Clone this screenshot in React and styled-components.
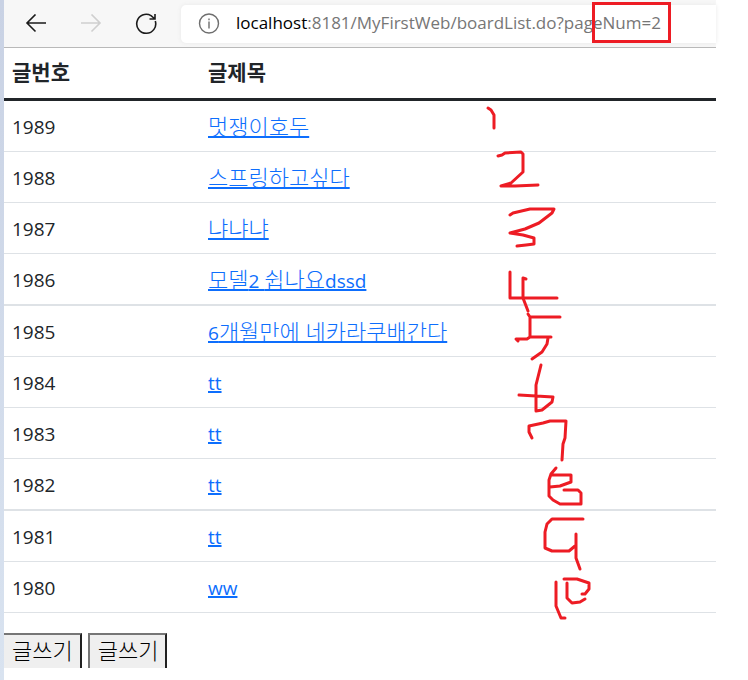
import React from "react";
import styled, { createGlobalStyle } from "styled-components";

const posts = [
  { no: 1989, title: [{ ko: "멋쟁이호두" }] },
  { no: 1988, title: [{ ko: "스프링하고싶다" }] },
  { no: 1987, title: [{ ko: "냐냐냐" }] },
  { no: 1986, title: [{ ko: "모델" }, { en: "2 " }, { ko: "쉽나요" }, { en: "dssd" }], thick: true },
  { no: 1985, title: [{ en: "6" }, { ko: "개월만에 네카라쿠배간다" }] },
  { no: 1984, title: [{ en: "tt" }] },
  { no: 1983, title: [{ en: "tt" }] },
  { no: 1982, title: [{ en: "tt" }], thick: true },
  { no: 1981, title: [{ en: "tt" }] },
  { no: 1980, title: [{ en: "ww" }] },
];

// pen strokes counting the rows, 1 to 10
const strokes = [
  "M488 108L491 110L494 115L494 128",
  "M498 156L502 155L505 153L521 152L523 154L523 172L511 183L501 186L515 186L538 185",
  "M510 215L513 213L530 209L554 209L552 213L539 223L525 229L510 233L523 235L534 238L534 244L526 245L517 246",
  "M510 272L510 298L557 298",
  "M526 279L523 278L523 298L528 311",
  "M560 317L530 317L528 314M530 317L530 337L551 337M530 337L527 339L516 339L518 341",
  "M548 338L547 344L542 352L532 359",
  "M541 365L536 385L536 411L542 410L552 402L553 397L536 396L519 395",
  "M532 438L529 432L529 426L543 423L550 421L566 421L565 438L563 444L562 460",
  "M556 468L551 474L549 480L549 496L553 500L560 504L581 504L581 493L578 490L564 490M551 475L571 475L571 482L560 486L550 487",
  "M583 519L552 519L547 524L545 532L545 548L552 551L569 551L575 546M576 534L576 558L580 569",
  "M556 582L556 606L561 618L565 618M564 579L577 579L589 583L589 589L585 594L582 594M567 583L567 598L572 603L580 602L585 599",
];

function Toolbar() {
  return (
    <StyledToolbar>
      <NavButton aria-label="뒤로">
        <svg width="22" height="20" viewBox="0 0 22 20">
          <path d="M21 9H2M10.500 .5L2 9L10.500 17.500" />
        </svg>
      </NavButton>
      <NavButton aria-label="앞으로" disabled>
        <svg width="22" height="20" viewBox="0 0 22 20">
          <path d="M1 9H20M11.500 .5L20 9L11.500 17.500" />
        </svg>
      </NavButton>
      <NavButton aria-label="새로 고침">
        <svg width="22" height="22" viewBox="0 0 22 22">
          <path d="M20.300 8A9.500 9.500 0 1 1 16 2.600L20 6M20 1V6H14.500" />
        </svg>
      </NavButton>
      <Address>
        <InfoIcon width="22" height="22" viewBox="0 0 22 22">
          <circle cx="11" cy="10.500" r="9.500" />
          <path d="M11 8.500V15.500M11 5.500V7.300" />
        </InfoIcon>
        <Url>
          <Host>localhost</Host>:8181/MyFirstWeb/boardList.do?pageNum=2
        </Url>
      </Address>
    </StyledToolbar>
  );
}

function App() {
  return (
    <Page>
      <GlobalStyle />
      <Edge />
      <Browser>
        <Toolbar />
        <Board>
          <colgroup>
            <NumberCol />
            <col />
          </colgroup>
          <thead>
            <tr>
              <Th>글번호</Th>
              <Th>글제목</Th>
            </tr>
          </thead>
          <tbody>
            {posts.map((post) => (
              <tr key={post.no}>
                <Td $thick={post.thick}>{post.no}</Td>
                <Td $thick={post.thick}>
                  <TitleLink href="#">
                    {post.title.map((part, i) =>
                      part.ko ? <Korean key={i}>{part.ko}</Korean> : part.en
                    )}
                  </TitleLink>
                </Td>
              </tr>
            ))}
          </tbody>
        </Board>
        <Actions>
          <WriteButton $cut>글쓰기</WriteButton>
          <WriteButton>글쓰기</WriteButton>
        </Actions>
      </Browser>
      <Marks width="748" height="680" viewBox="0 0 748 680">
        <rect x="593.500" y="3.500" width="76" height="38" />
        {strokes.map((d) => (
          <path key={d} d={d} />
        ))}
      </Marks>
    </Page>
  );
}

export default App;

const GlobalStyle = createGlobalStyle`
  body {
    margin: 0;
    background-color: #ffffff;
    color: #212529;
    font-family: "Open Sans", "Noto Sans CJK KR", sans-serif;
    font-size: 19px;
  }
`;

const Page = styled.div`
  position: relative;
  display: flex;
  min-height: 100vh;
  padding-right: 32px;
  box-sizing: border-box;
  overflow: hidden;
`;

const Edge = styled.div`
  flex: 0 0 4px;
  background: linear-gradient(#c9d2e4, #d9e3f0);
`;

const Browser = styled.main`
  flex: 1;
  min-width: 0;
`;

const StyledToolbar = styled.header`
  display: flex;
  align-items: center;
  height: 47px;
  padding-left: 21px;
  background-color: #f7f7f7;
  border-bottom: 1px solid #b9b9b9;
`;

const NavButton = styled.button`
  display: flex;
  align-items: center;
  justify-content: center;
  width: 22px;
  height: 32px;
  margin-right: 33px;
  padding: 0;
  border: 0;
  background: none;
  color: #1b1b1b;

  &:disabled {
    color: #cfcfcf;
  }

  &:last-of-type {
    margin-right: 24px;
  }

  svg {
    flex: none;
    fill: none;
    stroke: currentColor;
    stroke-width: 1.6;
  }
`;

const Address = styled.div`
  display: flex;
  align-items: center;
  flex: 1;
  min-width: 0;
  height: 38px;
  padding-left: 17px;
  border-radius: 5px 0 0 5px;
  background-color: #ffffff;
  box-shadow: 0 0 4px #e8e8e8;
`;

const InfoIcon = styled.svg`
  flex: none;
  fill: none;
  stroke: #6e6e6e;
  stroke-width: 1.4;
`;

const Url = styled.span`
  margin-left: 16px;
  padding-bottom: 2px;
  color: #767676;
  font-size: 17px;
  white-space: nowrap;
`;

const Host = styled.span`
  color: #000000;
`;

const Board = styled.table`
  width: 100%;
  table-layout: fixed;
  border-collapse: separate;
  border-spacing: 0;
`;

const NumberCol = styled.col`
  width: 196px;
`;

const Th = styled.th`
  height: 48px;
  padding: 0 8px 2px;
  border-bottom: 3px solid #212529;
  font-size: 21px;
  font-weight: 700;
  line-height: 30px;
  text-align: left;
`;

const Td = styled.td`
  height: 48px;
  padding: 2px 8px 0;
  border-bottom: ${(props) => (props.$thick ? "2px" : "1px")} solid #dee2e6;
  line-height: 30px;
`;

const TitleLink = styled.a`
  color: #0d6efd;
  text-decoration: underline;
  text-decoration-thickness: 2px;
  text-underline-offset: 1px;
`;

const Korean = styled.span`
  font-size: 22px;
  font-weight: 300;
`;

const Actions = styled.div`
  display: flex;
  gap: 6px;
  padding-top: 20px;
`;

const WriteButton = styled.button`
  height: 35px;
  padding: 0 7px 4px 8px;
  border: 2px solid;
  border-color: #767676 #212121 #212121 #767676;
  border-bottom-width: 0;
  border-left-width: ${(props) => (props.$cut ? "0" : "2px")};
  background-color: #efefef;
  color: #000000;
  font-family: "Noto Sans CJK KR", sans-serif;
  font-size: 22px;
  font-weight: 300;
  line-height: 29px;
`;

const Marks = styled.svg`
  position: absolute;
  top: 0;
  left: 0;
  pointer-events: none;
  fill: none;
  stroke: #ed1c24;
  stroke-width: 3;

  path {
    stroke-linecap: round;
    stroke-linejoin: round;
  }
`;
